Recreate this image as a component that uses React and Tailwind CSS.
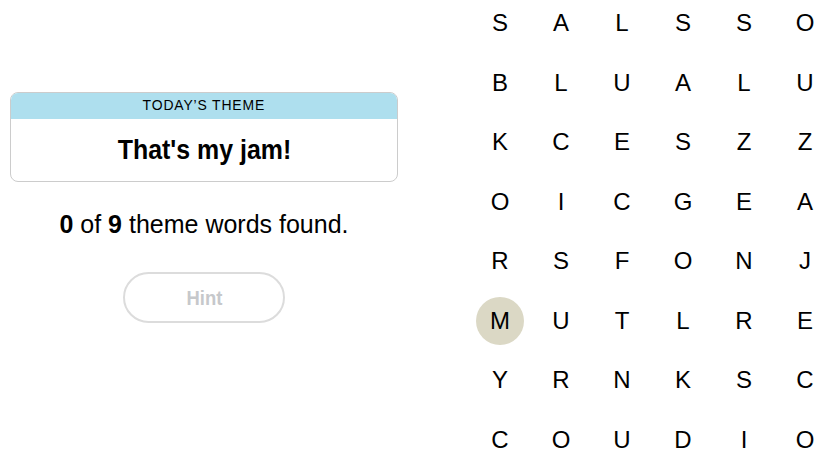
import React from "react";

const rows = [
  "SALSSO",
  "BLUALU",
  "KCESZZ",
  "OICGEA",
  "RSFONJ",
  "MUTLRE",
  "YRNKSC",
  "COUDIO",
];

export default function App() {
  return (
    <div className="w-[830px] h-[471px] overflow-hidden bg-white flex text-black font-['Liberation_Sans',Arial,sans-serif]">
      <div className="w-[408px] shrink-0 flex flex-col items-center px-[10px] pt-[92px]">
        <div className="w-[388px] border border-[#cccccc] rounded-[8px] overflow-hidden">
          <div className="h-[26px] bg-[#aedfee] flex items-center justify-center pb-[3px]">
            <span className="inline-block text-[15px] tracking-[0.06em] uppercase leading-none scale-x-[0.93]">Today’s Theme</span>
          </div>
          <div className="h-[62px] flex items-center justify-center">
            <span className="inline-block text-[28px] font-bold scale-x-[0.89]">That's my jam!</span>
          </div>
        </div>
        <div className="mt-[28px] text-[25px] leading-[28px]">
          <span className="font-bold">0</span> of <span className="font-bold">9</span> theme words found.
        </div>
        <button className="mt-[34px] w-[162px] h-[51px] rounded-full border-2 border-[#dcdcdc] text-[#c6c8cb] flex items-center justify-center">
          <span className="inline-block text-[20px] font-bold scale-x-[0.92]">Hint</span>
        </button>
      </div>
      <div className="ml-[68px] -mt-[1px] grid grid-cols-[repeat(6,48px)] gap-x-[13px] gap-y-[11.5px] content-start">
        {rows.map((row, r) =>
          row.split("").map((ch, c) => (
            <div
              key={`${r}-${c}`}
              className={
                r === 5 && c === 0
                  ? "w-[48px] h-[48px] rounded-full bg-[#dbd8c5] flex items-center justify-center text-[24px] leading-none"
                  : "w-[48px] h-[48px] rounded-full flex items-center justify-center text-[24px] leading-none"
              }
            >
              {ch}
            </div>
          ))
        )}
      </div>
    </div>
  );
}
